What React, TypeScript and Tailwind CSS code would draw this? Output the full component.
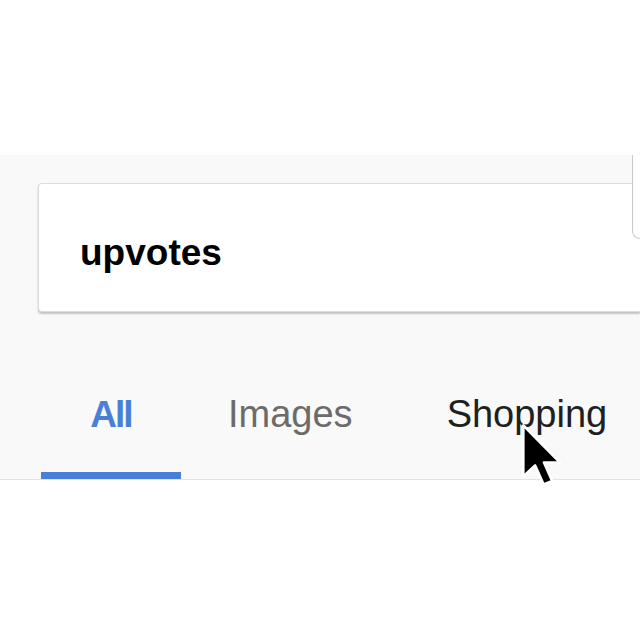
import React from "react";

const Cursor = () => (
  <svg
    width="46"
    height="66"
    viewBox="0 0 14 20"
    className="pointer-events-none absolute left-[520px] top-[422px]"
  >
    <path
      d="M1 1 L1 16.5 L4.6 13.2 L7.2 19 L9.8 17.9 L7.3 12.3 L12.2 12.3 Z"
      fill="#000"
      stroke="#fff"
      strokeWidth="0.8"
      strokeLinejoin="round"
    />
  </svg>
);

export default function App() {
  return (
    <div
      className="relative h-[640px] w-[640px] overflow-hidden bg-white"
      style={{ fontFamily: '"Liberation Sans", Arial, sans-serif' }}
    >
      <div className="h-[155px]" />

      <div className="relative border-b border-[#e2e2e2] bg-[#f9f9f9]">
        {/* partial panel at right edge */}
        <div className="absolute left-[632px] top-0 h-[84px] w-[40px] rounded-bl-[8px] border-b border-l border-[#c9c9c9] bg-white" />

        <div className="pt-[28px]">
          <div className="ml-[38px] h-[129px] rounded-l-[4px] border border-r-0 border-[#dcdcdc] bg-white pl-[41px] pt-[50px] shadow-[0_2px_2px_rgba(0,0,0,0.22)]">
            <span className="text-[37px] font-bold leading-[37px] text-black">
              upvotes
            </span>
          </div>
        </div>

        <div className="mt-[84px] flex pl-[41px]">
          <div className="flex w-[140px] shrink-0 flex-col">
            <span className="text-center text-[37px] font-bold leading-[37px] tracking-[-2px] text-[#4a7fd6]">
              All
            </span>
            <div className="mt-[39px] h-[7px] bg-[#4a7fd9]" />
          </div>
          <div className="flex shrink-0 flex-col px-[47px]">
            <span className="whitespace-nowrap text-[38px] leading-[37px] text-[#6b6b6b]">
              Images
            </span>
            <div className="mt-[39px] h-[7px]" />
          </div>
          <div className="flex shrink-0 flex-col px-[47px]">
            <span className="whitespace-nowrap text-[38px] leading-[37px] text-[#202020]">
              Shopping
            </span>
            <div className="mt-[39px] h-[7px]" />
          </div>
        </div>
      </div>

      <Cursor />
    </div>
  );
}
